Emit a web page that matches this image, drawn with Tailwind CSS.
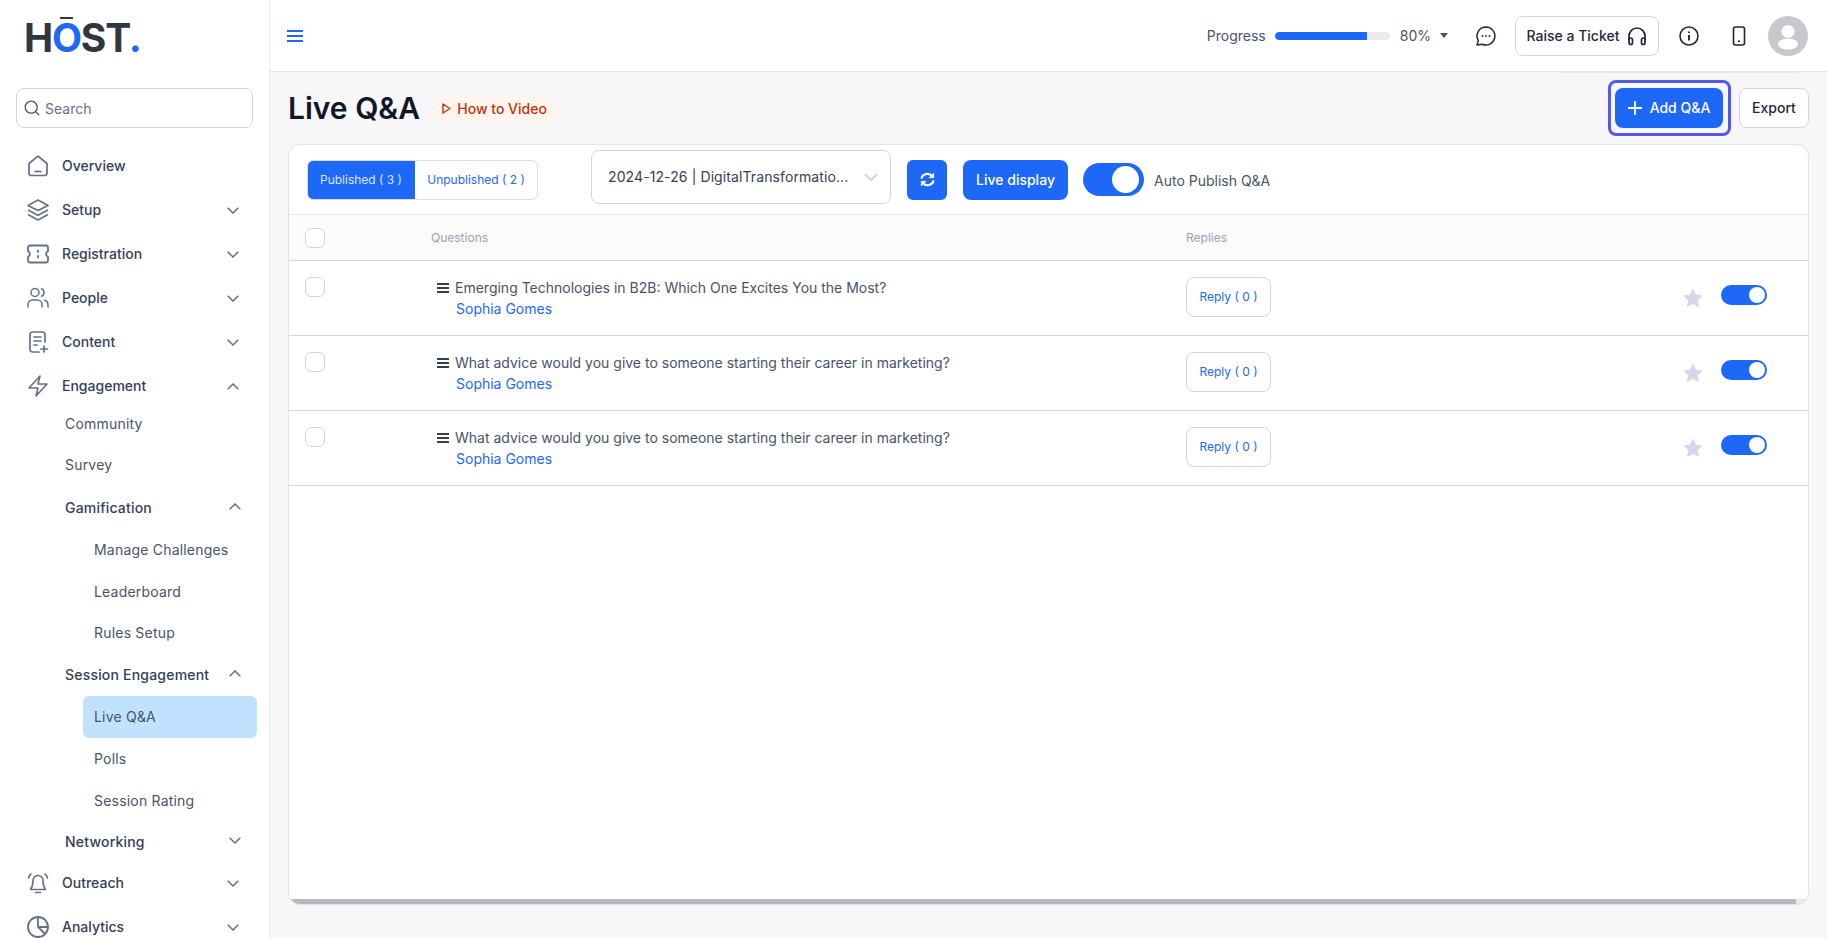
<!DOCTYPE html>
<html lang="en">

<head>
  <meta charset="UTF-8">
  <meta name="viewport" content="width=device-width, initial-scale=1.0">
  <title>Live Q&amp;A</title>
  <script src="https://cdn.jsdelivr.net/npm/@tailwindcss/browser@4"></script>
</head>

<body class="h-[938px] overflow-hidden bg-[#f7f7fa] font-['Inter',sans-serif] text-sm">
  <div class="flex h-[938px]">
    <!-- Sidebar -->
    <aside class="w-[270px] shrink-0 overflow-hidden border-r border-[#e9ebf0] bg-white">
      <div class="relative h-[88px] pl-[24px] pt-[14px] text-[39px] font-bold leading-[47px] tracking-[-1.2px] text-[#2f3640]">
        H<span class="relative text-[#1e68f8]">O<span class="absolute left-[8px] top-[3px] h-[2px] w-[13px] bg-[#2f3640]"></span></span>ST<span class="text-[#1e68f8]">.</span>
      </div>
      <div class="mx-4 flex h-10 w-[237px] items-center gap-[5px] rounded-lg border border-[#d0d5dd] px-[7px] text-[#667085]">
        <svg class="h-[16px] w-[16px]" viewBox="0 0 16 16" fill="none" stroke="#475467" stroke-width="1.3"><circle cx="7.2" cy="7.2" r="6"/><path d="M11.6 11.6 15 15"/></svg>
        <span class="mt-px">Search</span>
      </div>

      <nav class="mt-4 font-medium text-[#344054]">
        <div class="flex h-11 items-center pl-[27px]">
          <svg class="mr-[13px] h-[22px] w-[22px]" viewBox="0 0 22 22" fill="none" stroke="#667085" stroke-width="1.7" stroke-linejoin="round"><path d="M2 8.500 11 1.200l9 7.300V18a2.500 2.500 0 0 1-2.500 2.500h-13A2.500 2.500 0 0 1 2 18Z"/><path d="M7.500 16.500h7"/></svg>
          <span>Overview</span>
        </div>
        <div class="flex h-11 items-center pl-[27px] pr-[30px]">
          <svg class="mr-[13px] h-[22px] w-[22px]" viewBox="0 0 22 22" fill="none" stroke="#667085" stroke-width="1.6" stroke-linejoin="round"><path d="M11 1 21 6.500 11 11.500 1 6.500Z"/><path d="M1 11l10 5.200L21 11"/><path d="M1 15.500l10 5.500 10-5.500"/></svg>
          <span class="flex-1">Setup</span>
          <svg class="h-[7px] w-3" viewBox="0 0 12 7" fill="none" stroke="#667085" stroke-width="1.500"><path d="m.7.700 5.300 5.300L11.300.700"/></svg>
        </div>
        <div class="flex h-11 items-center pl-[27px] pr-[30px]">
          <svg class="mr-[13px] h-[22px] w-[22px]" viewBox="0 0 22 22" fill="none" stroke="#667085" stroke-width="1.800" stroke-linejoin="round"><path d="M3 2.500h16a2 2 0 0 1 2 2v3.700a3 3 0 0 0 0 5.600v3.700a2 2 0 0 1-2 2H3a2 2 0 0 1-2-2v-3.700a3 3 0 0 0 0-5.600V4.500a2 2 0 0 1 2-2Z"/><path d="M11 7.500v1.500M11 13v1.500" stroke-linecap="round"/></svg>
          <span class="flex-1">Registration</span>
          <svg class="h-[7px] w-3" viewBox="0 0 12 7" fill="none" stroke="#667085" stroke-width="1.500"><path d="m.7.700 5.300 5.300L11.300.700"/></svg>
        </div>
        <div class="flex h-11 items-center pl-[27px] pr-[30px]">
          <svg class="mr-[13px] h-[22px] w-[22px]" viewBox="0 0 22 22" fill="none" stroke="#667085" stroke-width="1.500" stroke-linecap="round"><circle cx="8" cy="5.500" r="4"/><path d="M1 20v-2.500A4.500 4.500 0 0 1 5.500 13h5a4.500 4.500 0 0 1 4.500 4.500V20"/><path d="M14.500 1.800a4 4 0 0 1 0 7.400"/><path d="M17.500 13.300A4.500 4.500 0 0 1 21 17.500V20"/></svg>
          <span class="flex-1">People</span>
          <svg class="h-[7px] w-3" viewBox="0 0 12 7" fill="none" stroke="#667085" stroke-width="1.500"><path d="m.7.700 5.300 5.300L11.300.700"/></svg>
        </div>
        <div class="flex h-11 items-center pl-[27px] pr-[30px]">
          <svg class="mr-[13px] h-[22px] w-[22px]" viewBox="0 0 22 22" fill="none" stroke="#667085" stroke-width="1.700" stroke-linecap="round"><path d="M18 11V3.500A2.500 2.500 0 0 0 15.500 1h-10A2.500 2.500 0 0 0 3 3.500v15A2.500 2.500 0 0 0 5.500 21H12"/><path d="M7 6h7M7 10h7M7 14h3M17 15v6M14 18h6.500"/></svg>
          <span class="flex-1">Content</span>
          <svg class="h-[7px] w-3" viewBox="0 0 12 7" fill="none" stroke="#667085" stroke-width="1.500"><path d="m.7.700 5.300 5.300L11.300.700"/></svg>
        </div>
        <div class="flex h-11 items-center pl-[27px] pr-[30px]">
          <svg class="mr-[13px] h-[22px] w-[22px]" viewBox="0 0 22 22" fill="none" stroke="#667085" stroke-width="1.600" stroke-linejoin="round"><path d="M13 1 2 13h9l-2 8 11-12h-9Z"/></svg>
          <span class="flex-1">Engagement</span>
          <svg class="h-[7px] w-3" viewBox="0 0 12 7" fill="none" stroke="#667085" stroke-width="1.500"><path d="m.7 6.300 5.300-5.300 5.300 5.300"/></svg>
        </div>

        <!-- Engagement children -->
        <div class="-mt-1 pl-[65px] pr-[28px] tracking-[0.2px]">
          <div class="flex h-10 items-center font-normal text-[#475467]">Community</div>
          <div class="flex h-[41px] items-center font-normal text-[#475467]">Survey</div>
          <div class="mt-[2px] flex h-[42px] items-center justify-between">Gamification
            <svg class="mb-[3px] h-[7px] w-3" viewBox="0 0 12 7" fill="none" stroke="#667085" stroke-width="1.500"><path d="m.7 6.300 5.300-5.300 5.300 5.300"/></svg>
          </div>
        </div>
        <div class="pl-[94px] font-normal tracking-[0.2px] text-[#475467]">
          <div class="flex h-[42px] items-center">Manage Challenges</div>
          <div class="flex h-[41px] items-center">Leaderboard</div>
          <div class="flex h-[42px] items-center">Rules Setup</div>
        </div>
        <div class="flex h-[42px] items-center justify-between pl-[65px] pr-[28px] tracking-[0.2px]">Session Engagement
          <svg class="mb-[3px] h-[7px] w-3" viewBox="0 0 12 7" fill="none" stroke="#667085" stroke-width="1.500"><path d="m.7 6.300 5.300-5.300 5.300 5.300"/></svg>
        </div>
        <div class="ml-[83px] mr-3 flex h-[42px] items-center rounded-md bg-[#c0e2ff] pl-[11px] font-normal tracking-[0.2px] text-[#475467]">Live Q&amp;A</div>
        <div class="pl-[94px] font-normal tracking-[0.2px] text-[#475467]">
          <div class="flex h-[42px] items-center">Polls</div>
          <div class="flex h-[41px] items-center">Session Rating</div>
        </div>
        <div class="flex h-[42px] items-center justify-between pl-[65px] pr-[28px] tracking-[0.2px]">Networking
          <svg class="mb-[3px] h-[7px] w-3" viewBox="0 0 12 7" fill="none" stroke="#667085" stroke-width="1.500"><path d="m.7.700 5.300 5.300L11.300.700"/></svg>
        </div>
        <div class="flex h-10 items-center pl-[27px] pr-[30px]">
          <svg class="mr-[13px] h-[22px] w-[22px]" viewBox="0 0 22 22" fill="none" stroke="#667085" stroke-width="1.600" stroke-linecap="round" stroke-linejoin="round"><path d="M3.500 17.500c1.500-2 2.500-4.500 2.500-9a5 5 0 0 1 10 0c0 4.500 1 7 2.500 9Z"/><path d="M8.500 20.500h5M1.500 6c.3-1.800 1-3 2.500-4M20.500 6c-.3-1.800-1-3-2.500-4"/></svg>
          <span class="flex-1">Outreach</span>
          <svg class="h-[7px] w-3" viewBox="0 0 12 7" fill="none" stroke="#667085" stroke-width="1.500"><path d="m.7.700 5.300 5.300L11.300.700"/></svg>
        </div>
        <div class="flex h-12 items-center pl-[27px] pr-[30px]">
          <svg class="mr-[13px] h-[22px] w-[22px]" viewBox="0 0 22 22" fill="none" stroke="#667085" stroke-width="1.800"><circle cx="11" cy="11" r="10"/><path d="M11 1v10l7 7M11 11h10"/></svg>
          <span class="flex-1">Analytics</span>
          <svg class="h-[7px] w-3" viewBox="0 0 12 7" fill="none" stroke="#667085" stroke-width="1.500"><path d="m.7.700 5.300 5.300L11.300.700"/></svg>
        </div>
      </nav>
    </aside>

    <div class="flex min-w-0 flex-1 flex-col">
      <!-- Top bar -->
      <header class="relative flex h-[72px] shrink-0 items-center border-b border-[#e4e7ec] bg-white pl-[17px] pr-[19px]">
        <svg class="h-[14px] w-[16px]" viewBox="0 0 16 14" fill="none" stroke="#1e68f8" stroke-width="2"><path d="M0 2h16M0 7h16M0 12h16"/></svg>
        <span class="ml-auto text-[#475467]">Progress</span>
        <div class="ml-[9px] h-2 w-[115px] overflow-hidden rounded-full bg-[#e9ebee]">
          <div class="h-2 w-[92px] rounded-l-full bg-[#1e68f8]"></div>
        </div>
        <span class="ml-[10px] text-[#475467]">80%</span>
        <div class="ml-[9px] h-0 w-0 border-x-[4.500px] border-t-[5px] border-x-transparent border-t-[#475467]"></div>
        <svg class="ml-[28px] h-5 w-5" viewBox="0 0 20 20" fill="none" stroke="#1d2939" stroke-width="1.500" stroke-linejoin="round"><path d="M10 1a9 9 0 1 1-3.800 17.200L1 19l1.300-4.400A9 9 0 0 1 10 1Z"/><path d="M6.500 10h.01M10 10h.01M13.500 10h.01" stroke-linecap="round" stroke-width="1.800"/></svg>
        <div class="ml-[19px] flex h-10 w-[144px] items-center justify-center gap-2 rounded-lg border border-[#d0d5dd] font-medium text-[#1d2939]">
          Raise a Ticket
          <svg class="h-[20px] w-[20px]" viewBox="0 0 20 20" fill="none" stroke="#1d2939" stroke-width="1.700"><path d="M2 14V10a8 8 0 0 1 16 0v4"/><rect x="2" y="12" width="3.500" height="6.500" rx="1.700"/><rect x="14.500" y="12" width="3.500" height="6.500" rx="1.700"/></svg>
        </div>
        <svg class="ml-[20px] h-5 w-5" viewBox="0 0 20 20" fill="none" stroke="#1d2939" stroke-width="1.600"><circle cx="10" cy="10" r="9"/><path d="M10 9v5.500M10 5.500v1.400" stroke-width="1.900"/></svg>
        <svg class="ml-[33px] h-[20px] w-[14px]" viewBox="0 0 14 20" fill="none" stroke="#1d2939" stroke-width="1.600"><rect x="1.500" y="1" width="11" height="18" rx="2"/><path d="M7 14.500v1.500" stroke-width="2"/></svg>
        <div class="ml-[22px] flex h-10 w-10 items-center justify-center overflow-hidden rounded-full bg-[#c6c8cd]">
          <svg class="h-10 w-10" viewBox="0 0 40 40" fill="#fff"><circle cx="20" cy="15.500" r="6.500"/><ellipse cx="20" cy="28" rx="10" ry="5.500"/></svg>
        </div>
        <div class="absolute -bottom-[2px] right-[28px] h-px w-[240px] bg-[#e4e9ee]"></div>
      </header>

      <main class="flex flex-1 flex-col pl-[18px] pr-[18px]">
        <div class="flex h-[72px] shrink-0 items-center">
          <h1 class="text-[30px] font-semibold leading-9 text-[#101828]">Live Q&amp;A</h1>
          <div class="ml-[10px] mt-[1px] flex h-7 w-[129px] items-center justify-center gap-[6px] rounded-full bg-[#fef6ee] font-medium text-[#c4320a]">
            <svg class="h-[11px] w-[9px]" viewBox="0 0 9 11" fill="none" stroke="#c4320a" stroke-width="1.400" stroke-linejoin="round"><path d="M1 1l7 4.500-7 4.500Z"/></svg>
            How to Video
          </div>
          <div class="relative ml-auto rounded-lg">
            <div class="absolute -inset-y-2 -left-[7px] -right-2 rounded-lg border-[3px] border-[#5558e8]"></div>
            <div class="flex h-10 w-[108px] items-center justify-center gap-2 rounded-lg bg-[#1e68f8] font-medium text-white">
              <svg class="h-[14px] w-[14px]" viewBox="0 0 14 14" fill="none" stroke="#fff" stroke-width="1.800"><path d="M7 0v14M0 7h14"/></svg>
              <span>Add Q&amp;A</span>
            </div>
          </div>
          <div class="ml-4 flex h-10 w-[70px] items-center justify-center rounded-lg border border-[#d0d5dd] bg-white font-medium text-[#1d2939]">Export</div>
        </div>

        <!-- Card -->
        <section class="relative flex h-[761px] flex-col overflow-hidden rounded-xl border border-[#e0e3ea] bg-white">
          <div class="flex h-[70px] shrink-0 items-center border-b border-[#e9ebef] pl-[18px]">
            <div class="flex h-10 w-[231px] overflow-hidden rounded-md border border-[#d9dde5] text-xs">
              <div class="-my-px -ml-px flex h-10 w-[108px] items-center justify-center bg-[#1e68f8] text-[#dbe7ff]">Published ( 3 )</div>
              <div class="flex flex-1 items-center justify-center text-[#1e68f8]">Unpublished ( 2 )</div>
            </div>
            <div class="ml-[53px] mt-[-6px] flex h-[54px] w-[300px] items-center justify-between rounded-lg border border-[#d0d5dd] pl-4 pr-3 text-[#344054]">
              <span class="tracking-[0.1px]">2024-12-26 | DigitalTransformatio...</span>
              <svg class="h-2 w-[14px]" viewBox="0 0 14 8" fill="none" stroke="#d0d5dd" stroke-width="2"><path d="m1 1 6 6 6-6"/></svg>
            </div>
            <div class="ml-4 flex h-10 w-10 items-center justify-center rounded-md bg-[#1e68f8]">
              <svg class="h-[15px] w-[15px]" viewBox="0 0 16 16" fill="none" stroke="#fff" stroke-width="2.300"><path d="M1.500 7A6.500 6.500 0 0 1 13 4.500M14.500 9A6.500 6.500 0 0 1 3 11.500"/><path d="M14.500 1v5h-5M1.500 15v-5h5" fill="#fff" stroke-width="1"/></svg>
            </div>
            <div class="ml-4 flex h-10 w-[105px] items-center justify-center rounded-lg bg-[#1e68f8] font-medium text-white">Live display</div>
            <div class="ml-[15px] flex h-[33px] w-[61px] items-center justify-end rounded-full bg-[#1e68f8] pr-[5px]">
              <div class="h-[27px] w-[27px] rounded-full bg-white"></div>
            </div>
            <span class="ml-[10px] mt-[2px] text-[#475467]">Auto Publish Q&amp;A</span>
          </div>

          <div class="grid h-[46px] shrink-0 grid-cols-[142px_755px_1fr] items-center border-b border-[#d0d5dd] bg-[#fbfbfb] text-xs text-[#98a2b3]">
            <div class="pl-4"><div class="h-5 w-5 rounded-md border border-[#d0d5dd] bg-white"></div></div>
            <div>Questions</div>
            <div>Replies</div>
          </div>

          <div class="grid h-[75px] shrink-0 grid-cols-[142px_755px_1fr] border-b border-[#d0d5dd]">
            <div class="pl-4 pt-4"><div class="h-5 w-5 rounded-md border border-[#d0d5dd]"></div></div>
            <div class="pl-[6px] pt-[17px]">
              <div class="flex h-5 items-center gap-[6px] text-[#475467]">
                <svg class="h-[10px] w-3" viewBox="0 0 12 10" fill="none" stroke="#344054" stroke-width="2"><path d="M0 1h12M0 5h12M0 9h12"/></svg>
                Emerging Technologies in B2B: Which One Excites You the Most?
              </div>
              <div class="ml-[19px] mt-[1px] leading-5 text-[#1e68f8]">Sophia Gomes</div>
            </div>
            <div class="flex items-start justify-between pr-[41px] pt-4">
              <div class="flex h-10 w-[85px] items-center justify-center rounded-lg border border-[#d0d5dd] text-xs text-[#1e68f8]">Reply ( 0 )</div>
              <div class="flex items-start gap-[18px] pt-2">
                <svg class="mt-[3px] h-5 w-5" viewBox="0 0 24 24" fill="#d5d6ec"><path d="M12 1.500l3.300 6.900 7.500 1-5.500 5.200 1.400 7.500L12 18.500l-6.700 3.600 1.400-7.500L1.200 9.400l7.500-1Z" stroke="#d5d6ec" stroke-linejoin="round"/></svg>
                <div class="flex h-5 w-[46px] items-center justify-end rounded-full bg-[#1e68f8] pr-[2px]"><div class="h-4 w-4 rounded-full bg-white"></div></div>
              </div>
            </div>
          </div>

          <div class="grid h-[75px] shrink-0 grid-cols-[142px_755px_1fr] border-b border-[#d0d5dd]">
            <div class="pl-4 pt-4"><div class="h-5 w-5 rounded-md border border-[#d0d5dd]"></div></div>
            <div class="pl-[6px] pt-[17px]">
              <div class="flex h-5 items-center gap-[6px] text-[#475467]">
                <svg class="h-[10px] w-3" viewBox="0 0 12 10" fill="none" stroke="#344054" stroke-width="2"><path d="M0 1h12M0 5h12M0 9h12"/></svg>
                What advice would you give to someone starting their career in marketing?
              </div>
              <div class="ml-[19px] mt-[1px] leading-5 text-[#1e68f8]">Sophia Gomes</div>
            </div>
            <div class="flex items-start justify-between pr-[41px] pt-4">
              <div class="flex h-10 w-[85px] items-center justify-center rounded-lg border border-[#d0d5dd] text-xs text-[#1e68f8]">Reply ( 0 )</div>
              <div class="flex items-start gap-[18px] pt-2">
                <svg class="mt-[3px] h-5 w-5" viewBox="0 0 24 24" fill="#d5d6ec"><path d="M12 1.500l3.300 6.900 7.500 1-5.500 5.200 1.400 7.500L12 18.500l-6.700 3.600 1.400-7.500L1.200 9.400l7.500-1Z" stroke="#d5d6ec" stroke-linejoin="round"/></svg>
                <div class="flex h-5 w-[46px] items-center justify-end rounded-full bg-[#1e68f8] pr-[2px]"><div class="h-4 w-4 rounded-full bg-white"></div></div>
              </div>
            </div>
          </div>

          <div class="grid h-[75px] shrink-0 grid-cols-[142px_755px_1fr] border-b border-[#d0d5dd]">
            <div class="pl-4 pt-4"><div class="h-5 w-5 rounded-md border border-[#d0d5dd]"></div></div>
            <div class="pl-[6px] pt-[17px]">
              <div class="flex h-5 items-center gap-[6px] text-[#475467]">
                <svg class="h-[10px] w-3" viewBox="0 0 12 10" fill="none" stroke="#344054" stroke-width="2"><path d="M0 1h12M0 5h12M0 9h12"/></svg>
                What advice would you give to someone starting their career in marketing?
              </div>
              <div class="ml-[19px] mt-[1px] leading-5 text-[#1e68f8]">Sophia Gomes</div>
            </div>
            <div class="flex items-start justify-between pr-[41px] pt-4">
              <div class="flex h-10 w-[85px] items-center justify-center rounded-lg border border-[#d0d5dd] text-xs text-[#1e68f8]">Reply ( 0 )</div>
              <div class="flex items-start gap-[18px] pt-2">
                <svg class="mt-[3px] h-5 w-5" viewBox="0 0 24 24" fill="#d5d6ec"><path d="M12 1.500l3.300 6.900 7.500 1-5.500 5.200 1.400 7.500L12 18.500l-6.700 3.600 1.400-7.500L1.200 9.400l7.500-1Z" stroke="#d5d6ec" stroke-linejoin="round"/></svg>
                <div class="flex h-5 w-[46px] items-center justify-end rounded-full bg-[#1e68f8] pr-[2px]"><div class="h-4 w-4 rounded-full bg-white"></div></div>
              </div>
            </div>
          </div>

          <!-- horizontal scrollbar -->
          <div class="mt-auto flex h-[5px] shrink-0 bg-[#e4e9f0]">
            <div class="h-[5px] flex-1 bg-[#b4b9be]"></div>
            <div class="w-3"></div>
          </div>
        </section>
      </main>
    </div>
  </div>
</body>

</html>
